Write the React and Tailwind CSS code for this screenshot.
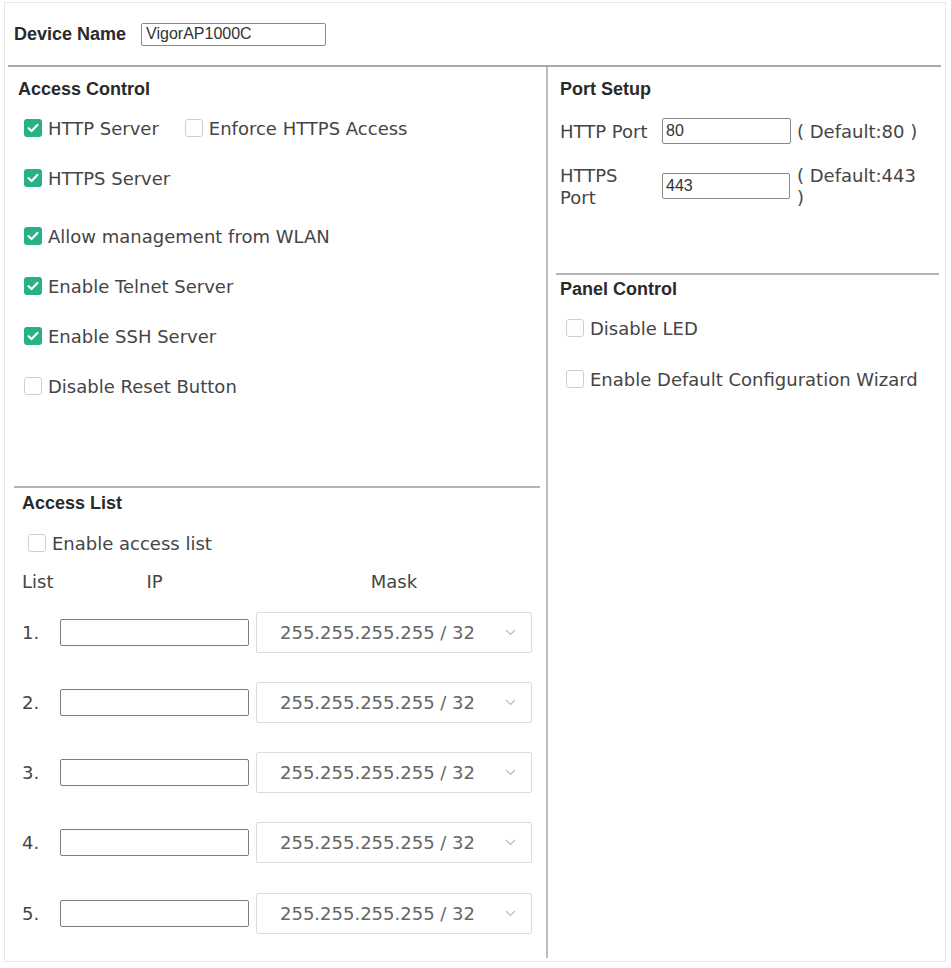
import React from 'react'

const body = "font-['DejaVu_Sans',sans-serif] text-[18px] text-[#454545]"
const head = "font-['Liberation_Sans',Arial,sans-serif] font-bold text-[18px] leading-[20px] text-[#2a2a2a]"

function Box({ checked }) {
  if (checked) {
    return (
      <span className="flex h-[18px] w-[18px] shrink-0 items-center justify-center rounded-[3px] bg-[#28b088]">
        <svg width="14" height="14" viewBox="0 0 14 14" fill="none">
          <path d="M2.6 7.2 L5.6 10 L11.4 3.9" stroke="white" strokeWidth="2.2" strokeLinecap="round" strokeLinejoin="round" />
        </svg>
      </span>
    )
  }
  return <span className="h-[18px] w-[18px] shrink-0 rounded-[3px] border border-[#cfcfcf] bg-white" />
}

function Check({ checked, label, className = '' }) {
  return (
    <label className={`flex items-center gap-[6px] ${className}`}>
      <Box checked={checked} />
      <span className={body}>{label}</span>
    </label>
  )
}

function Chevron() {
  return (
    <svg width="11" height="7" viewBox="0 0 11 7" fill="none">
      <path d="M1 1 L5.5 5.5 L10 1" stroke="#b8b8b8" strokeWidth="1.1" />
    </svg>
  )
}

const ROWS = ['1.', '2.', '3.', '4.', '5.']

export default function App() {
  return (
    <div className="h-[968px] w-[951px] bg-white pl-[4px] pt-[2px]">
      <div className="h-[960px] w-[942px] border border-[#e7e7e7]">

        {/* Device name */}
        <div className="flex h-[62px] items-center pl-[9px]">
          <span className={head}>Device Name</span>
          <div className="ml-[15px] flex h-[23px] w-[185px] items-center rounded-[2px] border border-[#8a8a8a] pl-[4px] font-['Liberation_Sans',Arial,sans-serif] text-[16px] text-[#333]">
            VigorAP1000C
          </div>
        </div>

        <div className="ml-[3px] mr-[4px] border-t-2 border-[#a9a9a9]">
          <div className="flex h-[891px]">

            {/* Left column */}
            <div className="w-[538px] shrink-0">
              <div className="h-[419px] pl-[10px] pt-[12px]">
                <div className={head}>Access Control</div>
                <div className="ml-[6px] mt-[4px]">
                  <div className="flex h-[50px] items-center">
                    <Check checked label="HTTP Server" />
                    <Check label="Enforce HTTPS Access" className="ml-[26px]" />
                  </div>
                  <div className="flex h-[50px] items-center"><Check checked label="HTTPS Server" /></div>
                  <div className="mt-[8px] flex h-[50px] items-center"><Check checked label="Allow management from WLAN" /></div>
                  <div className="flex h-[50px] items-center"><Check checked label="Enable Telnet Server" /></div>
                  <div className="flex h-[50px] items-center"><Check checked label="Enable SSH Server" /></div>
                  <div className="flex h-[50px] items-center"><Check label="Disable Reset Button" /></div>
                </div>
              </div>

              <div className="mx-[6px] border-t-2 border-[#b3b3b3]" />

              <div className="pl-[14px] pt-[5px]">
                <div className={head}>Access List</div>
                <div className="ml-[6px] mt-[15px] flex h-[30px] items-center">
                  <Check label="Enable access list" />
                </div>
                <div className={`mt-[14px] flex h-[20px] items-center leading-[20px] ${body}`}>
                  <span className="w-[38px]">List</span>
                  <span className="w-[189px] text-center">IP</span>
                  <span className="ml-[7px] w-[276px] text-center">Mask</span>
                </div>
                <div className="mt-[19px] flex flex-col gap-[28.25px]">
                  {ROWS.map(n => (
                    <div key={n} className="flex h-[42px] items-center">
                      <span className={`w-[38px] ${body}`}>{n}</span>
                      <div className="h-[27px] w-[189px] rounded-[2px] border border-[#7d7d7d] bg-white" />
                      <div className="ml-[7px] flex h-[41px] w-[276px] items-center justify-between rounded-[2px] border border-[#dcdcdc] pl-[23px] pr-[15px]">
                        <span className="font-['DejaVu_Sans',sans-serif] text-[18px] text-[#666]">255.255.255.255 / 32</span>
                        <Chevron />
                      </div>
                    </div>
                  ))}
                </div>
              </div>
            </div>

            {/* Right column */}
            <div className="flex-1 border-l-2 border-[#bdbdbd]">
              <div className="h-[206px] pl-[12px] pt-[12px]">
                <div className={head}>Port Setup</div>
                <div className="mt-[19px] flex h-[26px] items-center">
                  <span className={`w-[102px] ${body}`}>HTTP Port</span>
                  <div className="flex h-[26px] w-[129px] items-center rounded-[2px] border border-[#8a8a8a] pl-[3px] font-['Liberation_Sans',Arial,sans-serif] text-[16px] text-[#333]">80</div>
                  <span className={`ml-[6px] ${body}`}>( Default:80 )</span>
                </div>
                <div className="mt-[21px] flex items-start">
                  <span className={`w-[102px] leading-[22px] ${body}`}>HTTPS<br />Port</span>
                  <div className="mt-[8px] flex h-[26px] w-[128px] items-center rounded-[2px] border border-[#8a8a8a] pl-[3px] font-['Liberation_Sans',Arial,sans-serif] text-[16px] text-[#333]">443</div>
                  <span className={`ml-[7px] leading-[22px] ${body}`}>( Default:443<br />)</span>
                </div>
              </div>

              <div className="ml-[8px] mr-[2px] border-t-2 border-[#b3b3b3]" />

              <div className="pl-[12px] pt-[4px]">
                <div className={head}>Panel Control</div>
                <div className="ml-[6px] mt-[14px] flex h-[30px] items-center"><Check label="Disable LED" /></div>
                <div className="ml-[6px] mt-[21px] flex h-[30px] items-center"><Check label="Enable Default Configuration Wizard" /></div>
              </div>
            </div>

          </div>
        </div>
      </div>
    </div>
  )
}
